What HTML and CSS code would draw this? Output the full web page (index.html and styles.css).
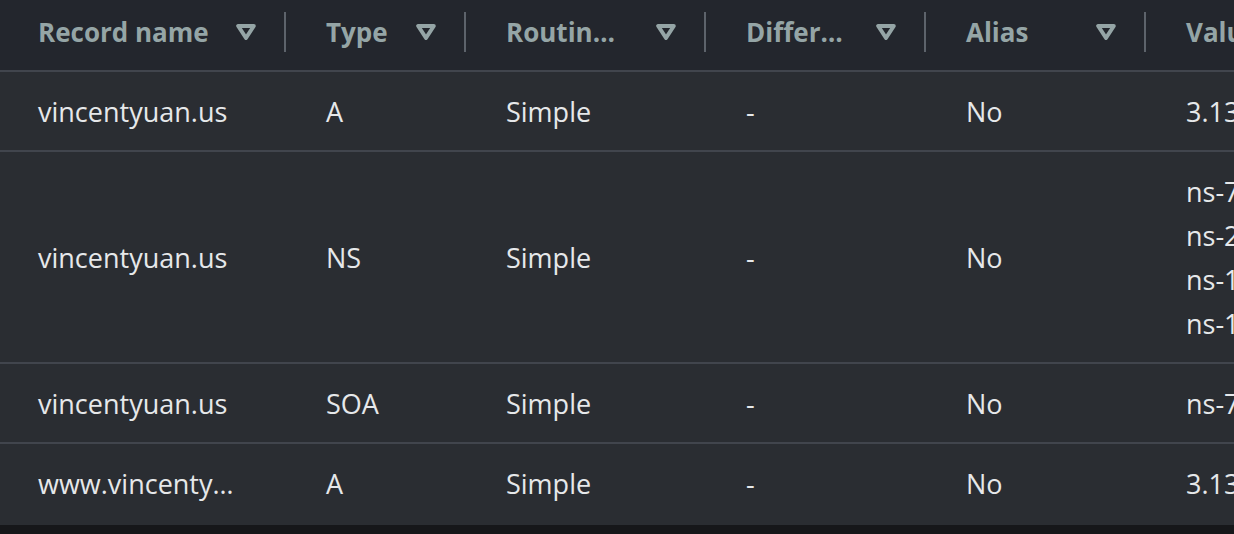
FILE: index.html
```html
<!DOCTYPE html>
<html lang="en">
<head>
<meta charset="utf-8">
<title>Hosted zone records</title>
<link rel="stylesheet" href="styles.css">
</head>
<body>
<div class="table-wrap">
  <table class="records">
    <colgroup>
      <col class="c-name">
      <col class="c-type">
      <col class="c-routing">
      <col class="c-diff">
      <col class="c-alias">
      <col class="c-value">
    </colgroup>
    <thead>
      <tr>
        <th><div class="th-inner"><span class="label">Record name</span><svg class="sort" viewBox="0 0 20 16"><polygon points="2.2,2 17.8,2 10,14"/></svg><span class="sep"></span></div></th>
        <th><div class="th-inner"><span class="label">Type</span><svg class="sort" viewBox="0 0 20 16"><polygon points="2.2,2 17.8,2 10,14"/></svg><span class="sep"></span></div></th>
        <th title="Routing policy"><div class="th-inner"><span class="label">Routin…</span><svg class="sort" viewBox="0 0 20 16"><polygon points="2.2,2 17.8,2 10,14"/></svg><span class="sep"></span></div></th>
        <th title="Differentiator"><div class="th-inner"><span class="label">Differ…</span><svg class="sort" viewBox="0 0 20 16"><polygon points="2.2,2 17.8,2 10,14"/></svg><span class="sep"></span></div></th>
        <th><div class="th-inner"><span class="label">Alias</span><svg class="sort" viewBox="0 0 20 16"><polygon points="2.2,2 17.8,2 10,14"/></svg><span class="sep"></span></div></th>
        <th><div class="th-inner"><span class="label">Value/Route traffic to</span></div></th>
      </tr>
    </thead>
    <tbody>
      <tr>
        <td class="name">vincentyuan.us</td>
        <td>A</td>
        <td>Simple</td>
        <td>-</td>
        <td>No</td>
        <td class="value">3.134.210.58</td>
      </tr>
      <tr>
        <td class="name">vincentyuan.us</td>
        <td>NS</td>
        <td>Simple</td>
        <td>-</td>
        <td>No</td>
        <td class="value">
          <div>ns-714.awsdns-25.net.</div>
          <div>ns-2012.awsdns-59.co.uk.</div>
          <div>ns-1307.awsdns-35.org.</div>
          <div>ns-1536.awsdns-00.co.uk.</div>
        </td>
      </tr>
      <tr>
        <td class="name">vincentyuan.us</td>
        <td>SOA</td>
        <td>Simple</td>
        <td>-</td>
        <td>No</td>
        <td class="value">ns-714.awsdns-25.net. awsdns-hostmaster.amazon.com. 1 7200 900 1209600 86400</td>
      </tr>
      <tr>
        <td class="name" title="www.vincentyuan.us">www.vincenty…</td>
        <td>A</td>
        <td>Simple</td>
        <td>-</td>
        <td>No</td>
        <td class="value">3.134.210.58</td>
      </tr>
    </tbody>
  </table>
</div>
</body>
</html>
```

FILE: styles.css
```css
html, body {
  margin: 0;
  padding: 0;
  background: #16171a;
  overflow: hidden;
}

body {
  font-family: "Open Sans", "Noto Sans", sans-serif;
  width: 1234px;
  height: 534px;
}

.table-wrap {
  width: 1234px;
  overflow: hidden;
}

.records {
  width: 1700px;
  table-layout: fixed;
  border-collapse: collapse;
  border-spacing: 0;
}

.c-name { width: 288px; }
.c-type { width: 180px; }
.c-routing { width: 240px; }
.c-diff { width: 220px; }
.c-alias { width: 220px; }
.c-value { width: 552px; }

thead th {
  background: #23262d;
  padding: 12px 2px 18px 38px;
  border-bottom: 2px solid #41454d;
  text-align: left;
  font-weight: 700;
  font-size: 26px;
  color: #95a5a6;
}

.th-inner {
  display: flex;
  align-items: center;
  height: 40px;
}

.label {
  flex: 1 1 auto;
  min-width: 0;
  white-space: nowrap;
  line-height: 40px;
}

.sort {
  flex: 0 0 auto;
  width: 20px;
  height: 16px;
  margin-left: 26px;
  fill: none;
  stroke: #95a5a6;
  stroke-width: 4;
  stroke-linejoin: round;
}

.sep {
  flex: 0 0 auto;
  width: 2px;
  height: 40px;
  margin-left: 28px;
  background: #5d636b;
}

tbody td {
  background: #2a2d32;
  padding: 18px 38px 16px 38px;
  border-bottom: 2px solid #41454d;
  font-size: 27px;
  line-height: 44px;
  color: #e6e8ea;
  white-space: nowrap;
  vertical-align: middle;
}

tbody tr:last-child td {
  border-bottom-color: #2a2d32;
  padding-bottom: 17px;
}

tbody td.value {
  overflow: hidden;
}
```
